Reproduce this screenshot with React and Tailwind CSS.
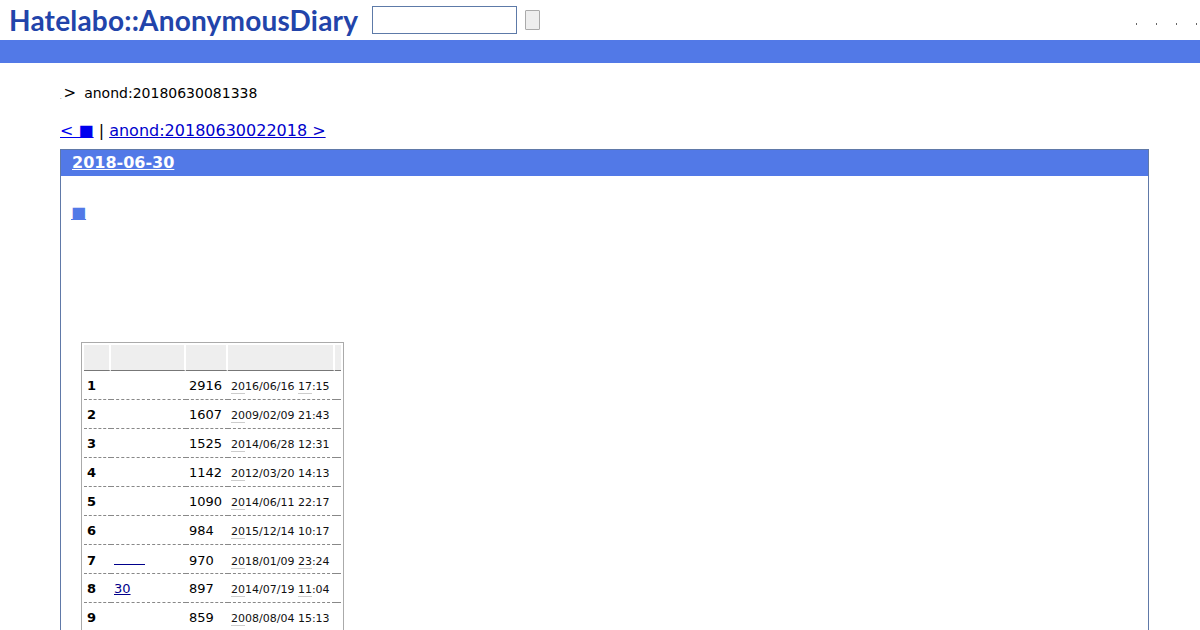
const rows = [
  { n: 1, count: 2916, day: "2016/06/16", time: "17:15", timeLine: true },
  { n: 2, count: 1607, day: "2009/02/09", time: "21:43" },
  { n: 3, count: 1525, day: "2014/06/28", time: "12:31" },
  { n: 4, count: 1142, day: "2012/03/20", time: "14:13" },
  { n: 5, count: 1090, day: "2014/06/11", time: "22:17" },
  { n: 6, count: 984, day: "2015/12/14", time: "10:17" },
  { n: 7, count: 970, day: "2018/01/09", time: "23:24", timeLine: true, blankLink: true },
  { n: 8, count: 897, day: "2014/07/19", time: "11:04", timeLine: true, title: "30" },
  { n: 9, count: 859, day: "2008/08/04", time: "15:13" },
];

function Row({ row }) {
  return (
    <tr className="h-[29px]">
      <td className="border-b border-dashed border-[#888] px-[3px] pt-[5px] align-baseline text-[13px] font-bold">{row.n}</td>
      <td className="border-b border-dashed border-[#888] px-[3px] pt-[5px] align-baseline text-[13px]">
        {row.title && <a href="#" className="text-[#00008b] underline">{row.title}</a>}
        {row.blankLink && <a href="#" className="inline-block h-[15px] w-[31px] border-b border-[#00008b]" />}
      </td>
      <td className="border-b border-dashed border-[#888] px-[3px] pt-[5px] align-baseline text-[13px]">{row.count}</td>
      <td className="border-b border-dashed border-[#888] px-[3px] pt-[5px] align-baseline text-[11px] whitespace-nowrap text-[#111]">
        <span className="border-b border-[#ccc]">{row.day.slice(0, 2)}</span>
        {row.day.slice(2)}{" "}
        {row.timeLine ? (
          <>
            <span className="border-b border-[#ccc]">{row.time.slice(0, 2)}</span>
            {row.time.slice(2)}
          </>
        ) : (
          row.time
        )}
      </td>
      <td className="border-b border-dashed border-[#888]" />
    </tr>
  );
}

export default function App() {
  return (
    <div className="h-[630px] overflow-hidden bg-white font-['DejaVu_Sans',sans-serif] text-[14px] text-black">
      <header className="flex h-10 items-center pl-[9px]">
        <div className="w-[349px] whitespace-nowrap font-['Lato',sans-serif] text-[28px] font-bold leading-none tracking-[0.2px] text-[#2244aa]">
          Hatelabo::AnonymousDiary
        </div>
        <input className="ml-[14px] h-7 w-[145px] border border-[#5d7aa8] bg-white" />
        <button className="ml-2 h-5 w-[15px] rounded-[1px] border border-[#aaa] bg-[#eee]" />
        <div className="ml-auto mr-[3px] mt-[8px] flex gap-[19px]">
          <span className="h-[2px] w-px bg-[#666]" />
          <span className="h-[2px] w-px bg-[#666]" />
          <span className="h-[2px] w-px bg-[#666]" />
          <span className="h-[2px] w-px bg-[#666]" />
        </div>
      </header>
      <div className="h-[23px] bg-[#5279e7]" />

      <div className="pl-[60px] pr-[51px]">
        <div className="mt-[21px] flex h-[18px] items-center leading-none">
          <span className="mt-2 text-[5px]">.</span>
          <span className="ml-[2px] text-[15px]">&gt;</span>
          <span className="ml-[8px]">anond:20180630081338</span>
        </div>
        <nav className="mt-[19px] h-[19px] text-[16px] leading-[19px]">
          <a href="#" className="text-[#0000ee] underline">&lt; ■</a>
          <span> | </span>
          <a href="#" className="text-[#0000cc] underline">anond:20180630022018 &gt;</a>
        </nav>
        <section className="mt-[9px] h-[600px] border border-[#6079a8]">
          <h2 className="flex h-[26px] items-center bg-[#5279e7] pl-[11px] text-[16px] font-bold text-white">
            <a href="#" className="underline">2018-06-30</a>
          </h2>
          <div className="pl-[10px] pt-[27px]">
            <a href="#" className="text-[16px] leading-[19px] text-[#5279e7] underline">■</a>
          </div>
          <div className="ml-[20px] mt-[118px] w-[263px] border border-[#aaa] p-[2px]">
            <table className="w-full border-separate border-spacing-0 text-left">
              <colgroup>
                <col className="w-[27px]" />
                <col className="w-[75px]" />
                <col className="w-[42px]" />
                <col className="w-[107px]" />
                <col />
              </colgroup>
              <thead>
                <tr className="h-[26px]">
                  {[0, 1, 2, 3, 4].map((i) => (
                    <th key={i} className="border-r-2 border-b border-r-white border-b-[#777] bg-[#eee] last:border-r-0" />
                  ))}
                </tr>
              </thead>
              <tbody>
                {rows.map((row) => (
                  <Row key={row.n} row={row} />
                ))}
              </tbody>
            </table>
          </div>
        </section>
      </div>
    </div>
  );
}
